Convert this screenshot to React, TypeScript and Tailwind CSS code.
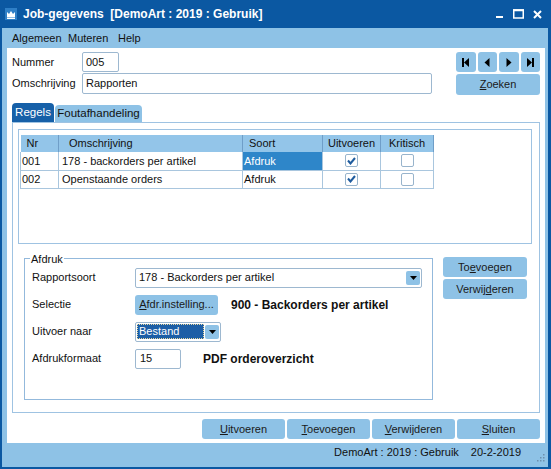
import type { ReactNode } from "react";

const blueBtn =
  "flex items-center justify-center rounded-[3px] bg-[#8ec2e6] text-[#1a1a1a]";
const field = "flex items-center rounded-[2px] border border-[#9db8d0] bg-white";

function Arrow() {
  return (
    <span className="flex h-[14px] w-[14px] items-center justify-center rounded-[2px] bg-[#8ec2e6]">
      <svg width="7" height="4" viewBox="0 0 7 4">
        <path d="M0 0h7L3.5 4z" fill="#000" />
      </svg>
    </span>
  );
}

function Check({ on }: { on?: boolean }) {
  return (
    <span className="mx-auto flex h-[13px] w-[13px] items-center justify-center rounded-[2px] border border-[#98b4cc] bg-white">
      {on && (
        <svg width="9" height="8" viewBox="0 0 9 8">
          <path d="M1 3.5l2.5 3L8 1" stroke="#1f5c9e" strokeWidth="2" fill="none" />
        </svg>
      )}
    </span>
  );
}

function Nav({ kind }: { kind: "first" | "prev" | "next" | "last" }) {
  return (
    <span className={`${blueBtn} h-[20px]`}>
      <svg width="8" height="9" viewBox="0 0 8 9" fill="#000">
        {kind === "first" && (
          <>
            <rect x="0" y="0" width="2" height="9" />
            <path d="M2 4.5L7 0v9z" />
          </>
        )}
        {kind === "prev" && <path d="M1.5 4.5L6.5 0v9z" />}
        {kind === "next" && <path d="M1.5 0l5 4.5-5 4.5z" />}
        {kind === "last" && (
          <>
            <path d="M1 0l5 4.5L1 9z" />
            <rect x="6" y="0" width="2" height="9" />
          </>
        )}
      </svg>
    </span>
  );
}

function Row({ label, children }: { label: string; children: ReactNode }) {
  return (
    <div className="flex h-[27px] items-center">
      <span className="w-[103px]">{label}</span>
      {children}
    </div>
  );
}

const rows = [
  { nr: "001", oms: "178 - backorders per artikel", sel: true },
  { nr: "002", oms: "Openstaande orders", sel: false },
];

export default function App() {
  return (
    <div className="flex h-[469px] w-[551px] flex-col bg-[#0b58a2] pb-[2px] pl-[2px] pr-[3px] font-['Liberation_Sans',Arial,sans-serif] text-[11px] text-[#111]">
      {/* title bar */}
      <div className="flex h-[28px] items-center text-white">
        <svg className="ml-[3px]" width="12" height="12" viewBox="0 0 12 12">
          <rect width="12" height="12" fill="#2f7fc6" />
          <path d="M2 4l2 2 2-3 2 3 2-2v5H2z" fill="#fff" />
          <rect x="2" y="9.5" width="8" height="1.5" fill="#fff" />
        </svg>
        <span className="ml-[6px] text-[12px] font-bold">
          Job-gegevens&nbsp;&nbsp;[DemoArt : 2019 : Gebruik]
        </span>
        <div className="ml-auto mr-[6px] flex items-center gap-[9px]">
          <svg width="8" height="10" viewBox="0 0 8 10">
            <rect x="0" y="7" width="7" height="2" fill="#fff" />
          </svg>
          <svg width="11" height="10" viewBox="0 0 11 10">
            <rect x="0.75" y="1" width="9.5" height="8" fill="none" stroke="#fff" strokeWidth="1.5" />
            <rect x="0" y="0.25" width="11" height="2" fill="#fff" />
          </svg>
          <svg width="9" height="9" viewBox="0 0 9 9">
            <path d="M1 1l7 7M8 1L1 8" stroke="#fff" strokeWidth="2" />
          </svg>
        </div>
      </div>

      <div className="flex flex-1 flex-col bg-[#8ec2e6] pl-[5px] pr-[3px]">
        {/* menu */}
        <div className="flex h-[20px] items-center pl-[5px]">
          <span className="w-[56px]">Algemeen</span>
          <span className="w-[50px]">Muteren</span>
          <span>Help</span>
        </div>

        {/* content */}
        <div className="flex h-[395px] flex-col bg-white px-[5px] pt-[4px]">
          <div className="flex h-[43px]">
            <div className="flex flex-col gap-[1px]">
              <div className="flex h-[20px] items-center">
                <span className="w-[70px]">Nummer</span>
                <span className={`${field} h-[20px] w-[37px] bg-[#eeeeee] pl-[3px]`}>005</span>
              </div>
              <div className="flex h-[21px] items-center">
                <span className="w-[70px]">Omschrijving</span>
                <span className={`${field} h-[21px] w-[350px] pl-[3px]`}>Rapporten</span>
              </div>
            </div>
            <div className="ml-auto flex w-[84px] flex-col gap-[2px]">
              <div className="grid grid-cols-4 gap-[2px]">
                <Nav kind="first" />
                <Nav kind="prev" />
                <Nav kind="next" />
                <Nav kind="last" />
              </div>
              <span className={`${blueBtn} h-[21px]`}>
                <span>
                  <u>Z</u>oeken
                </span>
              </span>
            </div>
          </div>

          {/* tabs */}
          <div className="mt-[8px] flex h-[19px] items-end">
            <span className="flex h-[19px] w-[42px] items-center justify-center rounded-t-[4px] bg-[#1660a8] text-[11.5px] text-white">
              Regels
            </span>
            <span className="ml-[1px] flex h-[17px] w-[87px] items-center justify-center rounded-t-[4px] bg-[#8ec2e6] text-[11.5px]">
              Foutafhandeling
            </span>
          </div>

          <div className="h-[291px] border border-[#9fc3e2] pl-[5px] pt-[6px]">
            {/* grid */}
            <div className="h-[115px] w-[514px] border border-[#9fc3e2] pl-[1px] pt-[5px]">
              <table className="table-fixed border-collapse">
                <colgroup>
                  <col className="w-[38px]" />
                  <col className="w-[184px]" />
                  <col className="w-[80px]" />
                  <col className="w-[58px]" />
                  <col className="w-[53px]" />
                </colgroup>
                <thead>
                  <tr className="h-[17px] bg-[#93c5e9] text-left">
                    <th className="border-r border-[#6f9ec8] pl-[6px] font-normal">Nr</th>
                    <th className="border-r border-[#6f9ec8] pl-[10px] font-normal">Omschrijving</th>
                    <th className="border-r border-[#6f9ec8] pl-[6px] font-normal">Soort</th>
                    <th className="border-r border-[#6f9ec8] text-center font-normal">Uitvoeren</th>
                    <th className="border-r border-[#6f9ec8] text-center font-normal">Kritisch</th>
                  </tr>
                </thead>
                <tbody>
                  {rows.map((r) => (
                    <tr key={r.nr} className="h-[18px]">
                      <td className="border border-t-0 border-[#a9c6de] pl-[1px]">{r.nr}</td>
                      <td className="border border-t-0 border-[#a9c6de] pl-[3px]">{r.oms}</td>
                      <td
                        className={`border border-t-0 border-[#a9c6de] pl-[1px] ${
                          r.sel ? "bg-[#2e86c9] text-white" : ""
                        }`}
                      >
                        Afdruk
                      </td>
                      <td className="border border-t-0 border-[#a9c6de]">
                        <Check on />
                      </td>
                      <td className="border border-t-0 border-[#a9c6de]">
                        <Check />
                      </td>
                    </tr>
                  ))}
                </tbody>
              </table>
            </div>

            <div className="mt-[13px] flex items-start">
              {/* Afdruk group */}
              <div className="relative ml-[6px] mt-[1px] h-[142px] w-[409px] border border-[#93b9dc] pl-[7px] pt-[5px]">
                <span className="absolute -top-[8px] left-[5px] bg-white px-[1px]">Afdruk</span>
                <Row label="Rapportsoort">
                  <span className={`${field} h-[20px] w-[287px] justify-between pl-[3px] pr-[1px]`}>
                    178 - Backorders per artikel
                    <Arrow />
                  </span>
                </Row>
                <Row label="Selectie">
                  <span className={`${blueBtn} h-[20px] w-[83px]`}>
                    <span>
                      <u>A</u>fdr.instelling...
                    </span>
                  </span>
                  <span className="ml-[13px] text-[12px] font-bold">900 - Backorders per artikel</span>
                </Row>
                <Row label="Uitvoer naar">
                  <span className={`${field} h-[20px] w-[86px] gap-[1px] pl-[1px] pr-[1px]`}>
                    <span className="flex h-[15px] w-[68px] items-center border border-dotted border-[#e8d9a0] bg-[#1c5ea6] pl-[1px] text-white">
                      Bestand
                    </span>
                    <Arrow />
                  </span>
                </Row>
                <Row label="Afdrukformaat">
                  <span className={`${field} h-[20px] w-[46px] pl-[4px]`}>15</span>
                  <span className="ml-[22px] text-[12px] font-bold">PDF orderoverzicht</span>
                </Row>
              </div>

              <div className="ml-[10px] flex w-[84px] flex-col gap-[2px]">
                <span className={`${blueBtn} h-[20px]`}>
                  <span>
                    To<u>e</u>voegen
                  </span>
                </span>
                <span className={`${blueBtn} h-[20px]`}>
                  <span>
                    Verwij<u>d</u>eren
                  </span>
                </span>
              </div>
            </div>
          </div>

          {/* bottom buttons */}
          <div className="mt-[6px] flex justify-end gap-[2px]">
            {[
              ["U", "itvoeren"],
              ["T", "oevoegen"],
              ["V", "erwijderen"],
              ["S", "luiten"],
            ].map(([a, b]) => (
              <span key={a} className={`${blueBtn} h-[20px] w-[83px]`}>
                <span>
                  <u>{a}</u>
                  {b}
                </span>
              </span>
            ))}
          </div>
        </div>

        {/* status bar */}
        <div className="flex flex-1 items-start justify-end pt-[3px]">
          <span className="leading-[13px]">DemoArt : 2019 : Gebruik</span>
          <span className="ml-[12px] leading-[13px]">20-2-2019</span>
          <svg className="ml-[13px] mt-[7px]" width="11" height="11" viewBox="0 0 11 11" fill="#6d8fae">
            <rect x="9" y="1" width="1.5" height="1.5" />
            <rect x="6" y="4" width="1.5" height="1.5" />
            <rect x="9" y="4" width="1.5" height="1.5" />
            <rect x="3" y="7" width="1.5" height="1.5" />
            <rect x="6" y="7" width="1.5" height="1.5" />
            <rect x="9" y="7" width="1.5" height="1.5" />
          </svg>
        </div>
      </div>
    </div>
  );
}
